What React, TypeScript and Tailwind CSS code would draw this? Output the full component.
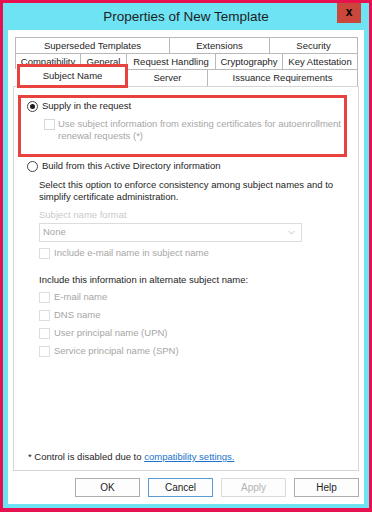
import React from 'react';

const Tab = ({ label, w, last = false }: { label: string; w: string; last?: boolean }) => (
  <div
    className={`${w} h-full shrink-0 flex items-center justify-center border-l border-t border-[#b9b9b9] bg-white ${last ? 'border-r' : ''}`}
  >
    <span className="text-[9.5px] text-[#1e1e1e] leading-none whitespace-nowrap">{label}</span>
  </div>
);

const Check = ({ label }: { label: string }) => (
  <div className="flex items-center gap-[4px] h-[18px]">
    <div className="w-[11px] h-[11px] border border-[#dedede] bg-white shrink-0" />
    <span className="text-[9.5px] text-[#a6a6a6] whitespace-nowrap">{label}</span>
  </div>
);

const Radio = ({ checked, label }: { checked: boolean; label: string }) => (
  <div className="flex items-center gap-[4px] h-[14px]">
    <div className="w-[11px] h-[11px] rounded-full border border-[#444] bg-white flex items-center justify-center shrink-0">
      {checked && <div className="w-[5px] h-[5px] rounded-full bg-[#1e1e1e]" />}
    </div>
    <span className="text-[9.5px] text-[#1e1e1e] whitespace-nowrap">{label}</span>
  </div>
);

const Btn = ({ label, disabled = false, focus = false }: { label: string; disabled?: boolean; focus?: boolean }) => (
  <button
    className={`w-[65px] h-[19px] flex items-center justify-center text-[10px] border bg-[#fdfdfd] ${
      disabled
        ? 'border-[#dadada] text-[#b3b3b3]'
        : focus
          ? 'border-[#5b9bd5] text-[#1e1e1e]'
          : 'border-[#adadad] text-[#1e1e1e]'
    }`}
  >
    {label}
  </button>
);

export default function App() {
  return (
    <div
      className="w-[372px] h-[512px] bg-[#e8114f] pt-[3px] px-[3px] pb-[4px]"
      style={{ fontFamily: '"Liberation Sans", Arial, sans-serif' }}
    >
      <div className="w-full h-full bg-[#6de3f4] flex flex-col px-[5px] pb-[4px]">
        {/* title bar */}
        <div className="h-[27px] flex items-center relative shrink-0">
          <span className="w-full text-center text-[13.5px] text-[#1e1e1e] pt-[1px]">Properties of New Template</span>
          <div className="absolute right-[3px] top-0 w-[24px] h-[20px] bg-[#c9473b] flex items-center justify-center">
            <span className="text-[12px] font-bold text-black leading-none pb-[2px]">x</span>
          </div>
        </div>

        <div className="flex-1 bg-white flex flex-col pt-[7px] px-[5px]">
          {/* tabs */}
          <div className="flex flex-col">
            <div className="flex h-[16px] ml-[2px]">
              <Tab label="Superseded Templates" w="w-[154px]" />
              <Tab label="Extensions" w="w-[100px]" />
              <Tab label="Security" w="w-[89px]" last />
            </div>
            <div className="flex h-[16px] ml-[2px]">
              <Tab label="Compatibility" w="w-[65px]" />
              <Tab label="General" w="w-[46px]" />
              <Tab label="Request Handling" w="w-[89px]" />
              <Tab label="Cryptography" w="w-[67px]" />
              <Tab label="Key Attestation" w="w-[76px]" last />
            </div>
            <div className="flex h-[17px] items-end ml-[4px]">
              <div className="w-[111px] h-[24px] shrink-0 self-end mb-[-2px] border-[3px] border-[#e8423f] bg-white flex items-center justify-center relative z-10">
                <span className="text-[9.5px] text-[#1e1e1e] whitespace-nowrap">Subject Name</span>
              </div>
              <div className="w-[79px] h-full shrink-0 flex items-center justify-center border-t border-[#b9b9b9]">
                <span className="text-[9.5px] text-[#1e1e1e]">Server</span>
              </div>
              <div className="w-[151px] h-full shrink-0 flex items-center justify-center border-t border-l border-r border-[#b9b9b9]">
                <span className="text-[9.5px] text-[#1e1e1e] whitespace-nowrap">Issuance Requirements</span>
              </div>
            </div>
          </div>

          {/* panel */}
          <div className="h-[385px] border border-[#d6d6d6] flex flex-col">
            <div className="ml-[4px] mt-[8px] w-[329px] h-[62px] border-[3px] border-[#e8423f] pl-[6px] flex flex-col">
              <div className="mt-[1px]">
                <Radio checked label="Supply in the request" />
              </div>
              <div className="flex items-start gap-[3px] ml-[17px] mt-[5px]">
                <div className="w-[11px] h-[11px] mt-[1px] border border-[#d6d6d6] bg-white shrink-0" />
                <div className="text-[9.5px] leading-[12px] text-[#a6a6a6] whitespace-nowrap">
                  Use subject information from existing certificates for autoenrollment
                  <br />
                  renewal requests (*)
                </div>
              </div>
            </div>

            <div className="pl-[13px] mt-[2px] flex flex-col">
              <Radio checked={false} label="Build from this Active Directory information" />
              <div className="ml-[12px] mt-[6px] text-[9.5px] leading-[12px] text-[#1e1e1e] whitespace-nowrap">
                Select this option to enforce consistency among subject names and to
                <br />
                simplify certificate administration.
              </div>
              <div className="ml-[12px] mt-[6px] text-[9.5px] text-[#cacaca] leading-[12px]">Subject name format</div>
              <div className="ml-[12px] mt-[2px] w-[263px] h-[19px] border border-[#dcdcdc] flex items-center justify-between pl-[3px] pr-[6px]">
                <span className="text-[9.5px] text-[#a6a6a6]">None</span>
                <svg width="7" height="5" viewBox="0 0 7 5">
                  <path d="M0.5 1 L3.5 4 L6.5 1" stroke="#c4c4c4" strokeWidth="1" fill="none" />
                </svg>
              </div>
              <div className="ml-[12px] mt-[2px]">
                <Check label="Include e-mail name in subject name" />
              </div>
              <div className="ml-[12px] mt-[12px] text-[9.5px] text-[#1e1e1e] leading-[12px]">
                Include this information in alternate subject name:
              </div>
              <div className="ml-[12px] mt-[2px] flex flex-col">
                <Check label="E-mail name" />
                <Check label="DNS name" />
                <Check label="User principal name (UPN)" />
                <Check label="Service principal name (SPN)" />
              </div>
            </div>

            <div className="mt-auto mb-[7px] pl-[14px] text-[9.5px] leading-[12px] text-[#1e1e1e]">
              * Control is disabled due to{' '}
              <span className="text-[#1a73c9] underline">compatibility settings.</span>
            </div>
          </div>

          {/* buttons */}
          <div className="flex justify-end gap-[8px] mt-[7px]">
            <Btn label="OK" />
            <Btn label="Cancel" focus />
            <Btn label="Apply" disabled />
            <Btn label="Help" />
          </div>
        </div>
      </div>
    </div>
  );
}
